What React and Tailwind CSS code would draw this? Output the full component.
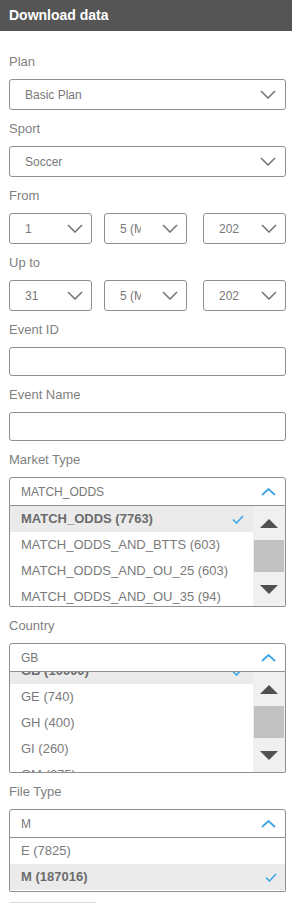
import React from "react";

const Down = ({ c = "#777" }) => (
  <svg width="16" height="9" viewBox="0 0 16 9" className="shrink-0">
    <path d="M1 1 L8 8 L15 1" stroke={c} strokeWidth="1.6" fill="none" />
  </svg>
);
const Up = () => (
  <svg width="15" height="8" viewBox="0 0 15 8" className="shrink-0">
    <path d="M1 7 L7.5 1 L14 7" stroke="#3ea6e6" strokeWidth="1.8" fill="none" />
  </svg>
);
const Check = () => (
  <svg width="12" height="9" viewBox="0 0 12 9" className="shrink-0">
    <path d="M1 4.5 L4.5 8 L11 1" stroke="#3ea6e6" strokeWidth="1.6" fill="none" />
  </svg>
);

const Label = ({ children }) => (
  <div className="h-[36px] flex items-center pt-[2px] text-[13px] text-[#7f7f7f]">{children}</div>
);

const Select = ({ value }) => (
  <div className="h-[31px] w-[277px] border border-[#8f8f8f] rounded-[3px] flex items-center justify-between pl-[15px] pr-[9px] text-[12px] text-[#777]">
    <span>{value}</span>
    <Down />
  </div>
);

const Small = ({ value, className = "" }) => (
  <div className={"h-[31px] w-[83px] border border-[#8f8f8f] rounded-[3px] flex items-center justify-between pl-[15px] pr-[8px] text-[12px] text-[#777] " + className}>
    <span className="w-[21px] overflow-hidden whitespace-nowrap">{value}</span>
    <Down />
  </div>
);

const Input = () => <div className="h-[29px] w-[277px] border border-[#8f8f8f] rounded-[3px]" />;

const OpenHead = ({ value }) => (
  <div className="h-[29px] w-[277px] border border-[#8f8f8f] rounded-t-[3px] flex items-center justify-between pl-[11px] pr-[9px] text-[12px] text-[#777]">
    <span>{value}</span>
    <Up />
  </div>
);

const Item = ({ children, sel, checkPad = "pr-[9px]" }) => (
  <div
    className={
      "h-[26px] shrink-0 flex items-center justify-between pl-[11px] text-[13px] whitespace-nowrap " +
      checkPad +
      (sel ? " bg-[#ebebeb] font-bold text-[#6b6b6b]" : " text-[#7a7a7a]")
    }
  >
    <span>{children}</span>
    {sel && <Check />}
  </div>
);

const Scrollbar = () => (
  <div className="w-[32px] shrink-0 bg-[#f0f0f0] flex flex-col">
    <div className="h-[34px] flex items-center justify-center">
      <svg width="18" height="9" viewBox="0 0 18 9">
        <polygon points="0,9 9,0 18,9" fill="#505050" />
      </svg>
    </div>
    <div className="h-[32px] mx-[1px] bg-[#c1c1c1]" />
    <div className="flex-1 flex items-center justify-center">
      <svg width="18" height="9" viewBox="0 0 18 9">
        <polygon points="0,0 18,0 9,9" fill="#505050" />
      </svg>
    </div>
  </div>
);

export default function App() {
  return (
    <div className="w-[292px] min-h-[903px] bg-white font-['Liberation_Sans',Arial,sans-serif]">
      <div className="h-[31px] bg-[#555555] text-white font-bold text-[14px] pl-[9px] flex items-center pb-[1px]">
        Download data
      </div>
      <div className="pl-[9px] pt-[12px]">
        <Label>Plan</Label>
        <Select value="Basic Plan" />
        <Label>Sport</Label>
        <Select value="Soccer" />
        <Label>From</Label>
        <div className="flex">
          <Small value="1" />
          <Small value="5 (May)" className="ml-[12px]" />
          <Small value="2021" className="ml-[16px]" />
        </div>
        <Label>Up to</Label>
        <div className="flex">
          <Small value="31" />
          <Small value="5 (May)" className="ml-[12px]" />
          <Small value="2021" className="ml-[16px]" />
        </div>
        <Label>Event ID</Label>
        <Input />
        <Label>Event Name</Label>
        <Input />
        <Label>Market Type</Label>
        <OpenHead value="MATCH_ODDS" />
        <div className="w-[277px] h-[101px] border-x border-b border-[#8f8f8f] rounded-b-[2px] flex overflow-hidden">
          <div className="flex-1 flex flex-col overflow-hidden">
            <Item sel>MATCH_ODDS (7763)</Item>
            <Item>MATCH_ODDS_AND_BTTS (603)</Item>
            <Item>MATCH_ODDS_AND_OU_25 (603)</Item>
            <Item>MATCH_ODDS_AND_OU_35 (94)</Item>
          </div>
          <Scrollbar />
        </div>
        <Label>Country</Label>
        <OpenHead value="GB" />
        <div className="w-[277px] h-[101px] border-x border-b border-[#8f8f8f] rounded-b-[2px] flex overflow-hidden">
          <div className="flex-1 flex flex-col overflow-hidden">
            <div className="mt-[-14px] flex flex-col">
              <Item sel>GB (10000)</Item>
              <Item>GE (740)</Item>
              <Item>GH (400)</Item>
              <Item>GI (260)</Item>
              <Item>GM (375)</Item>
            </div>
          </div>
          <Scrollbar />
        </div>
        <Label>File Type</Label>
        <OpenHead value="M" />
        <div className="w-[277px] h-[54px] border-x border-b border-[#8f8f8f] rounded-b-[2px] flex flex-col overflow-hidden">
          <Item>E (7825)</Item>
          <Item sel checkPad="pr-[8px]">M (187016)</Item>
        </div>
        <div className="mt-[10px] w-[86px] h-[30px] ml-[1px] border-t border-[#dcdcdc]" />
      </div>
    </div>
  );
}
